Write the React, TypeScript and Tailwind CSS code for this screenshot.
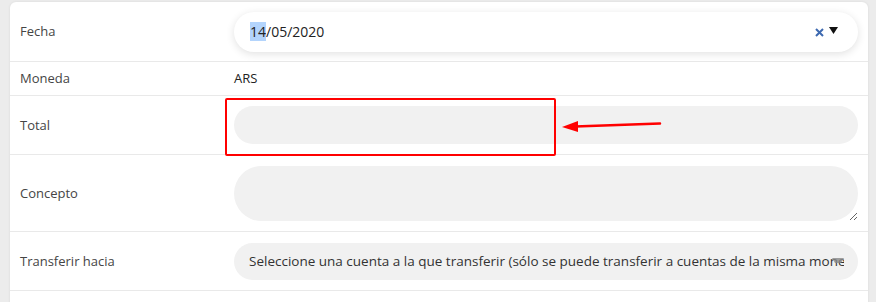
import React from 'react';

function Row({ label, h, children }: { label: string; h: string; children: React.ReactNode }) {
  return (
    <div className={`flex items-center border-b border-[#e9e9e9] ${h}`}>
      <div className="w-[214px] shrink-0 pl-[10px] pt-[1px] text-[13px] text-[#454545]">{label}</div>
      <div className="flex-1 min-w-0 px-[10px]">{children}</div>
    </div>
  );
}

export default function App() {
  return (
    <div className="h-[302px] w-[876px] overflow-hidden bg-[#ececec] pl-[10px] pr-[8px] pt-[2px] font-['Open_Sans',sans-serif]">
      <div className="relative h-[320px] rounded-t-[6px] bg-white shadow-[0_0_3px_rgba(0,0,0,0.08)]">
        <Row label="Fecha" h="h-[60px]">
          <div className="flex h-[40px] items-center rounded-full bg-white pl-[16px] pr-[20px] shadow-[0_2px_8px_rgba(0,0,0,0.12)]">
            <span className="text-[14px] text-[#222]">
              <span className="bg-[#b3d4fc]">14</span>/05/2020
            </span>
            <span className="ml-auto flex items-center gap-[5px]">
              <svg width="9" height="9" viewBox="0 0 9 9" className="mt-[2px]">
                <path d="M1 1 L8 8 M8 1 L1 8" stroke="#3d69b0" strokeWidth="2" />
              </svg>
              <svg width="9" height="7" viewBox="0 0 9 7" className="-mt-[2px]">
                <path d="M0 0 L9 0 L4.5 7 Z" fill="#111" />
              </svg>
            </span>
          </div>
        </Row>
        <Row label="Moneda" h="h-[34px]">
          <span className="block pt-[1px] text-[13px] text-[#222]">ARS</span>
        </Row>
        <Row label="Total" h="h-[59px]">
          <input className="block h-[38px] w-full rounded-full bg-[#f1f1f1] px-[14px] text-[14px] outline-none" />
        </Row>
        <Row label="Concepto" h="h-[77px]">
          <textarea className="block h-[55px] w-full resize-y rounded-[28px] bg-[#f1f1f1] px-[14px] text-[14px] outline-none" />
        </Row>
        <Row label="Transferir hacia" h="h-[59px]">
          <div className="relative flex h-[37px] items-center rounded-full bg-[#f1f1f1] pl-[15px] pr-[14px]">
            <span className="min-w-0 flex-1 overflow-hidden whitespace-nowrap text-[13.5px] text-[#333]">
              Seleccione una cuenta a la que transferir (sólo se puede transferir a cuentas de la misma moneda)
            </span>
            <svg width="12" height="6" viewBox="0 0 12 6" className="absolute right-[14px] top-[15px]">
              <path d="M0 0 L12 0 L9 5 L3 5 Z" fill="#888" opacity="0.8" />
            </svg>
          </div>
        </Row>

        {/* highlight annotation */}
        <div className="absolute left-[215px] top-[96px] h-[58px] w-[331px] rounded-[2px] border-[2px] border-[#ff0000]" />
        <svg className="absolute left-[545px] top-[110px]" width="120" height="24" viewBox="0 0 120 24">
          <path d="M105 11.5 L20 14.5" stroke="#ff0000" strokeWidth="2.5" strokeLinecap="round" />
          <path d="M7 15 L23 9 L23 20 Z" fill="#ff0000" />
        </svg>
      </div>
    </div>
  );
}
